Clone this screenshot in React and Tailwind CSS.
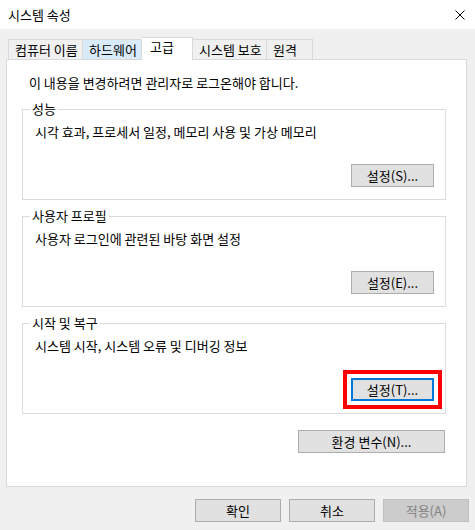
import React from "react";

// Windows "시스템 속성" dialog, 고급 tab
const tabs = [
  { name: "컴퓨터 이름", width: "w-[75px]" },
  { name: "하드웨어", width: "w-[59px]", hover: true },
  { name: "고급", width: "w-[51px]", active: true },
  { name: "시스템 보호", width: "w-[74px]" },
  { name: "원격", width: "w-[46px]" },
];

const groups = [
  { label: "성능", text: "시각 효과, 프로세서 일정, 메모리 사용 및 가상 메모리", button: "설정(S)..." },
  { label: "사용자 프로필", text: "사용자 로그인에 관련된 바탕 화면 설정", button: "설정(E)..." },
  { label: "시작 및 복구", text: "시스템 시작, 시스템 오류 및 디버깅 정보", button: "설정(T)...", focused: true },
];

const font = { fontFamily: '"Noto Sans CJK KR", "Liberation Sans", sans-serif' };

const WinButton = ({ children, className = "", disabled, focused }) => (
  <div
    className={`h-[23px] flex items-center justify-center text-[13px] leading-none ${
      disabled
        ? "bg-[#cccccc] border border-[#bfbfbf] text-[#838383]"
        : focused
        ? "bg-[#e1e1e1] border-2 border-[#0078d7] text-black"
        : "bg-[#e1e1e1] border border-[#adadad] text-black"
    } ${className}`}
  >
    {children}
  </div>
);

const Group = ({ label, text, button, focused }) => (
  <div className="relative w-[424px] h-[91px] border border-[#dcdcdc] flex flex-col pt-[14px] pl-[12px] pr-[11px]">
    <span className="absolute -top-[9px] left-[7px] bg-white px-[2px] text-[13px] leading-[16px]">
      {label}
    </span>
    <div className="text-[13px] leading-[16px]">{text}</div>
    <div className="flex justify-end mt-[24px]">
      {focused ? (
        <div className="border-4 border-[#ff0000] p-[4px] -m-[8px]">
          <WinButton focused className="w-[83px]">{button}</WinButton>
        </div>
      ) : (
        <WinButton className="w-[83px]">{button}</WinButton>
      )}
    </div>
  </div>
);

const App = () => {
  return (
    <div className="w-[475px] h-[530px] bg-[#f0f0f0] flex flex-col text-black" style={font}>
      {/* Title bar */}
      <div className="h-[29px] bg-white flex items-center justify-between pl-[8px] pr-[10px]">
        <span className="text-[13px] leading-none">시스템 속성</span>
        <svg width="10" height="10" viewBox="0 0 10 10" className="mt-[1px]">
          <path d="M0.5 0.5 L9.5 9.5 M9.5 0.5 L0.5 9.5" stroke="#000" strokeWidth="1" />
        </svg>
      </div>

      {/* Tabs */}
      <div className="flex items-end pl-[8px] mt-[8px] h-[22px] relative z-10">
        {tabs.map((t, i) => (
          <div
            key={t.name}
            className={`${t.width} flex items-center text-[13px] leading-none border-t border-r border-[#d9d9d9] ${
              i === 0 ? "border-l" : ""
            } ${
              t.active
                ? "h-[23px] bg-white pl-[8px] pb-[5px] -mb-px"
                : t.hover
                ? "h-[20px] bg-[#d9ebf9] pl-[6px]"
                : "h-[20px] pl-[6px]"
            }`}
          >
            {t.name}
          </div>
        ))}
      </div>

      {/* Tab panel */}
      <div className="ml-[6px] w-[461px] h-[428px] bg-white border border-[#d9d9d9] flex flex-col pt-[15px] pl-[15px]">
        <div className="text-[13px] leading-[16px] pl-[7px]">이 내용을 변경하려면 관리자로 로그온해야 합니다.</div>
        <div className="flex flex-col gap-[16px] mt-[18px]">
          {groups.map((g) => (
            <Group key={g.label} {...g} />
          ))}
        </div>
        <div className="w-[424px] flex justify-end mt-[16px] pr-px">
          <WinButton className="w-[147px]">환경 변수(N)...</WinButton>
        </div>
      </div>

      {/* Dialog buttons */}
      <div className="flex justify-end gap-[8px] pr-[6px] mt-[12px]">
        <WinButton className="w-[86px]">확인</WinButton>
        <WinButton className="w-[86px]">취소</WinButton>
        <WinButton className="w-[86px]" disabled>적용(A)</WinButton>
      </div>
    </div>
  );
};

export default App;
